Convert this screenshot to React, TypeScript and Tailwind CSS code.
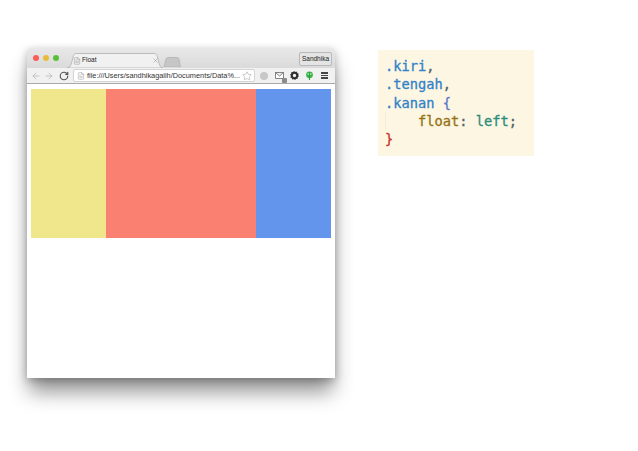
import { ArrowLeft, ArrowRight, FileText, RotateCw, Star, X } from 'lucide-react';

const mono = { fontFamily: '"DejaVu Sans Mono", monospace' };
const sans = { fontFamily: '"Liberation Sans", sans-serif' };

const BrowserChrome = () => (
  <div className="h-[36px] rounded-t-[4px] border-b border-[#a9a9a9] bg-gradient-to-b from-[#e8e8e8] to-[#d0d0d0]">
    <div className="flex h-[20px] items-end pl-[6px] pr-[3px]">
      <div className="flex gap-[4px] self-start pt-[7px]">
        <span className="h-[6px] w-[6px] rounded-full bg-[#fc5b57]" />
        <span className="h-[6px] w-[6px] rounded-full bg-[#e9bb3a]" />
        <span className="h-[6px] w-[6px] rounded-full bg-[#57c038]" />
      </div>
      <div className="relative ml-[8px] flex h-[15px] w-[96px] items-center pl-[6px] pr-[4px]">
        <svg viewBox="0 0 96 15" className="absolute inset-0 h-full w-full">
          <path
            d="M0 15C3 15 3.5 13 4.5 10L6.5 2.5C7 1 8 .5 9.5 .5L87 .5C88.5 .5 89.5 1 90 2.5L92 10C93 13 93.5 15 96 15Z"
            fill="#f1f1f1"
            stroke="#b0b0b0"
            strokeWidth="0.8"
          />
        </svg>
        <FileText size={8} strokeWidth={1.1} className="relative text-[#777]" />
        <span className="relative ml-[1px] text-[6.5px] leading-none text-[#222]" style={sans}>
          Float
        </span>
        <X size={7} strokeWidth={1.6} className="relative ml-auto text-[#8a8a8a]" />
      </div>
      <svg viewBox="0 0 18 10" className="mb-[1px] h-[10px] w-[18px]">
        <path d="M1 10L3 2C3.3 1 4 .5 5 .5L14 .5C15 .5 15.5 1 16 2L17.5 10Z" fill="#c6c6c6" stroke="#b4b4b4" strokeWidth="0.8" />
      </svg>
      <div
        className="mb-[2px] ml-auto flex h-[14px] w-[33px] items-center justify-center rounded-[2px] border border-[#b8b8b8] bg-[#e4e4e4] text-[6.5px] text-[#222]"
        style={sans}
      >
        Sandhika
      </div>
    </div>
    <div className="flex h-[15px] items-center bg-[#f1f1f1] pl-[4px] pr-[5px]">
      <ArrowLeft size={10} strokeWidth={2.2} className="text-[#bdbdbd]" />
      <ArrowRight size={10} strokeWidth={2.2} className="ml-[3px] text-[#bdbdbd]" />
      <RotateCw size={10} strokeWidth={2.8} className="ml-[5px] text-[#555]" />
      <div className="ml-[4px] flex h-[13px] w-[182px] items-center rounded-[2px] border border-[#d4d4d4] bg-white pl-[3px] pr-[2px]">
        <FileText size={8} strokeWidth={1.1} className="shrink-0 text-[#777]" />
        <span className="ml-[2px] whitespace-nowrap text-[7.35px] leading-none text-[#333]" style={sans}>
          file:///Users/sandhikagalih/Documents/Data%...
        </span>
        <Star size={10} strokeWidth={1.1} className="ml-auto shrink-0 text-[#8c8c8c]" />
      </div>
      <span className="ml-[5px] h-[8px] w-[8px] rounded-full bg-[#c8c8c8]" />
      <div className="relative ml-[7px] h-[7px] w-[9px]">
        <svg viewBox="0 0 9 7" className="absolute inset-0 h-full w-full">
          <path d="M.5 .5H8.5V6.5H.5ZM.5 .5L4.5 4L8.5 .5" fill="#fff" stroke="#666" strokeWidth="0.8" />
        </svg>
        <span className="absolute -bottom-[4px] -right-[3px] h-[5px] w-[5px] rounded-[1px] bg-[#8a8a8a]" />
      </div>
      <svg viewBox="0 0 10 10" className="ml-[6px] h-[9px] w-[9px]">
        <circle cx="5" cy="5" r="3" fill="none" stroke="#2f2f2f" strokeWidth="2.2" />
        <circle cx="5" cy="5" r="4.2" fill="none" stroke="#2f2f2f" strokeWidth="1.2" strokeDasharray="1.3 1.3" />
      </svg>
      <svg viewBox="0 0 10 10" className="ml-[6px] h-[9px] w-[9px]">
        <circle cx="5" cy="4.3" r="3.8" fill="#3bb54a" />
        <rect x="4.4" y="2" width="1.2" height="8" fill="#2f9c3f" />
        <rect x="3" y="2.4" width="1" height="2" fill="#e2f5e4" />
        <rect x="6" y="2.4" width="1" height="2" fill="#e2f5e4" />
      </svg>
      <div className="ml-[7px] flex w-[7px] flex-col gap-[1px]">
        <span className="h-[1.5px] bg-[#444]" />
        <span className="h-[1.5px] bg-[#444]" />
        <span className="h-[1.5px] bg-[#444]" />
      </div>
    </div>
  </div>
);

const App = () => {
  return (
    <div className="flex h-[451px] w-[638px] items-start overflow-hidden bg-white pl-[27px] pt-[48px]">
      <div className="h-[330px] w-[308px] rounded-t-[4px] bg-white shadow-[0_16px_20px_-2px_rgba(0,0,0,0.42),0_2px_9px_rgba(0,0,0,0.26)]">
        <BrowserChrome />
        <div className="flex px-[4px] pt-[5px]">
          <div className="h-[149px] w-[75px] bg-[#f0e68c]" />
          <div className="h-[149px] w-[150px] bg-[#fa8072]" />
          <div className="h-[149px] w-[75px] bg-[#6495ed]" />
        </div>
      </div>
      <pre
        className="relative ml-[43px] mt-[2px] h-[106px] w-[156px] bg-[#fdf6e3] pl-[7px] pt-[7px] text-[13.7px] leading-[18.3px] [-webkit-text-stroke:0.3px]"
        style={mono}
      >
        <span className="absolute left-[7px] top-[62px] h-[18px] w-px bg-[#f3ecd8]" />
        <span className="text-[#3182c8]">.kiri</span>
        <span className="text-[#4f6068]">,</span>
        {'\n'}
        <span className="text-[#3182c8]">.tengah</span>
        <span className="text-[#4f6068]">,</span>
        {'\n'}
        <span className="text-[#3182c8]">.kanan</span> <span className="text-[#5b78c8]">{'{'}</span>
        {'\n'}
        {'    '}
        <span className="text-[#94710f]">float</span>
        <span className="text-[#4f6068]">:</span> <span className="text-[#2b8c7c]">left</span>
        <span className="text-[#4f6068]">;</span>
        {'\n'}
        <span className="text-[#c9302c]">{'}'}</span>
      </pre>
    </div>
  );
};

export default App;
